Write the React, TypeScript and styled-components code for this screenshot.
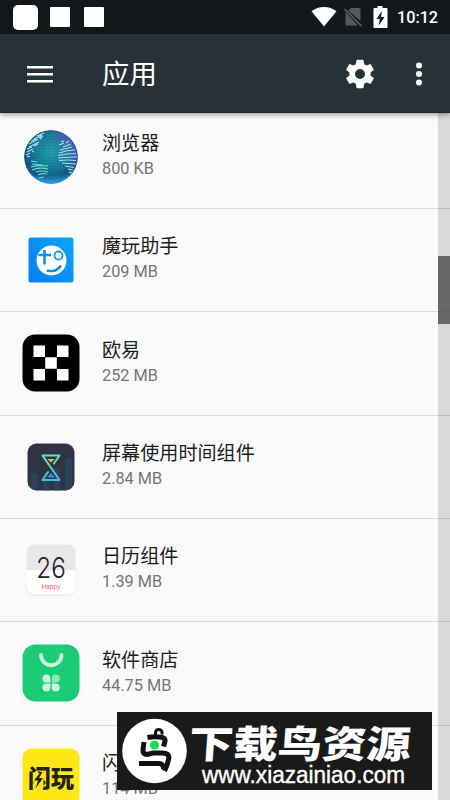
import React from "react";
import styled, { createGlobalStyle } from "styled-components";

const GlobalStyle = createGlobalStyle`
  * {
    box-sizing: border-box;
  }
  body {
    margin: 0;
    overflow: hidden;
    font-family: Roboto, "Noto Sans CJK SC", sans-serif;
    background: #fafafa;
  }
  svg {
    display: block;
    flex-shrink: 0;
  }
`;

const Screen = styled.div`
  position: relative;
  display: flex;
  flex-direction: column;
  width: 450px;
  height: 800px;
  overflow: hidden;
  background: #fafafa;
`;

const StatusBar = styled.div`
  display: flex;
  align-items: center;
  height: 34px;
  flex-shrink: 0;
  padding: 0 11px 0 13px;
  background: #14181b;
`;

const Notice = styled.div<{ $size: number; $radius: number; $gap: number }>`
  width: ${({ $size }) => $size}px;
  height: ${({ $size }) => $size}px;
  margin-right: ${({ $gap }) => $gap}px;
  border-radius: ${({ $radius }) => $radius}px;
  background: #fff;
`;

const StatusIcons = styled.div`
  display: flex;
  align-items: center;
  margin-left: auto;
`;

const Clock = styled.span`
  width: 42px;
  margin-left: 9px;
  color: #fff;
  font-size: 16.2px;
  font-weight: 500;
  line-height: 35px;
  white-space: nowrap;
`;

const Toolbar = styled.header`
  position: relative;
  z-index: 1;
  display: flex;
  align-items: center;
  height: 79px;
  flex-shrink: 0;
  padding: 1px 24px 0 27px;
  background: #273238;
  border-bottom: 1px solid #1b2529;
  box-shadow: 0 2px 5px rgba(0, 0, 0, 0.35);
`;

const Title = styled.h1`
  flex: 1;
  margin: 0 0 0 49px;
  padding-top: 3px;
  color: #fff;
  font-size: 27.5px;
  font-weight: 400;
  line-height: 40px;
`;

const List = styled.main`
  position: relative;
  flex: 1;
  min-height: 0;
  overflow: hidden;
`;

const Rows = styled.ul`
  margin: -7.4px 0 0;
  padding: 0;
  list-style: none;
`;

const Row = styled.li`
  display: flex;
  align-items: center;
  height: 103.33px;
  border-bottom: 1.4px solid #d9d9d9;
`;

const IconSlot = styled.div`
  display: flex;
  align-items: center;
  justify-content: center;
  width: 102px;
  height: 60px;
`;

const Details = styled.div`
  padding-bottom: 2px;
`;

const Name = styled.div`
  color: #1c1c1c;
  font-size: 19.1px;
  line-height: 26px;
`;

const Size = styled.div`
  color: #757575;
  font-size: 16.3px;
  line-height: 23.5px;
`;

const ScrollTrack = styled.div`
  position: absolute;
  top: 0;
  right: 0;
  bottom: 0;
  width: 12px;
  background: rgba(0, 0, 0, 0.13);
`;

const ScrollThumb = styled.div`
  height: 68px;
  margin-top: 143px;
  background: rgba(70, 70, 70, 0.77);
`;

const Watermark = styled.div`
  position: absolute;
  left: 117px;
  top: 712px;
  z-index: 2;
  display: flex;
  align-items: center;
  width: 315px;
  height: 78px;
  padding-left: 5px;
  background: #1a1a1a;
  color: #fff;
`;

const MenuIcon = () => (
  <svg width="26" height="18" fill="#fff">
    <path d="M0 1h26v2.6H0zM0 8h26v2.6H0zM0 15h26v2.6H0z" />
  </svg>
);

const SettingsIcon = () => (
  <svg width="34" height="34" viewBox="0 0 24 24" fill="#fff">
    <path d="M19.43 12.98c.04-.32.07-.64.07-.98s-.03-.66-.07-.98l2.11-1.65c.19-.15.24-.42.12-.64l-2-3.46c-.12-.22-.39-.3-.61-.22l-2.49 1c-.52-.4-1.08-.73-1.69-.98l-.38-2.65A.49.49 0 0 0 14 2h-4c-.25 0-.46.18-.49.42l-.38 2.65c-.61.25-1.17.59-1.69.98l-2.49-1c-.23-.09-.49 0-.61.22l-2 3.46c-.13.22-.07.49.12.64l2.11 1.65c-.04.32-.07.65-.07.98s.03.66.07.98l-2.11 1.65c-.19.15-.24.42-.12.64l2 3.46c.12.22.39.3.61.22l2.49-1c.52.4 1.08.73 1.69.98l.38 2.65c.03.24.24.42.49.42h4c.25 0 .46-.18.49-.42l.38-2.65c.61-.25 1.17-.59 1.69-.98l2.49 1c.23.09.49 0 .61-.22l2-3.46c.12-.22.07-.49-.12-.64l-2.11-1.65zM12 15.5a3.5 3.5 0 1 1 0-7 3.5 3.5 0 0 1 0 7z" />
  </svg>
);

const MoreIcon = styled.svg`
  margin-left: 35px;
`;

const WifiIcon = () => (
  <svg width="26" height="20" fill="#fff">
    <path d="M13 19.5L.5 4.3C4 1.5 8.3 0 13 0s9 1.500 12.500 4.300z" />
  </svg>
);

const NoSimIcon = styled.svg`
  margin: 0 11px 0 7px;
`;

const BatteryIcon = () => (
  <svg width="15" height="22">
    <path d="M4.500 0h5v2H13.500q1 0 1 1v18q0 1-1 1h-12q-1 0-1-1V3q0-1 1-1h3z" fill="#fff" />
    <path d="M8.800 5L3.500 13h3.300l-1 6.500L11.500 11H8z" fill="#14181b" />
  </svg>
);

const BrowserIcon = () => (
  <svg width="56" height="56" viewBox="0 0 56 56">
    <defs>
      <radialGradient id="globe" cx=".5" cy=".4" r=".6">
        <stop offset="0" stopColor="#259fae" />
        <stop offset=".5" stopColor="#177d98" />
        <stop offset=".85" stopColor="#12547f" />
        <stop offset="1" stopColor="#2183c0" />
      </radialGradient>
      <linearGradient id="rim" x1=".5" y1=".5" x2="1" y2=".15">
        <stop offset=".3" stopColor="#7657d8" stopOpacity="0" />
        <stop offset="1" stopColor="#8a51e0" />
      </linearGradient>
      <linearGradient id="floor" x1="0" y1="0" x2="0" y2="1">
        <stop offset=".82" stopColor="#2fa8e8" stopOpacity="0" />
        <stop offset="1" stopColor="#2fa8e8" stopOpacity=".9" />
      </linearGradient>
      <pattern id="dots" width="3" height="3" patternUnits="userSpaceOnUse">
        <circle cx="1.500" cy="1.500" r=".6" fill="#0b4771" />
      </pattern>
      <clipPath id="globeClip">
        <circle cx="28" cy="28" r="27" />
      </clipPath>
    </defs>
    <g clipPath="url(#globeClip)">
      <circle cx="28" cy="28" r="27" fill="url(#globe)" />
      <circle cx="28" cy="28" r="27" fill="url(#dots)" opacity=".4" />
      <circle cx="28" cy="28" r="27" fill="url(#rim)" opacity=".75" />
      <circle cx="28" cy="28" r="27" fill="url(#floor)" />
      <g fill="none" stroke="#a8e2ee" strokeWidth="1.200">
        <path d="M14 7l7-3M11 10l8-4M8 12l5-2m3-1l4-2M6 15l9-5m2 0l2-1M6 18l10-5M4 20l5-2m2-1l4-2M4 23l6-3M3 26l4-2m2-1l2-1M4 28l3-1" />
        <path d="M38 13l3-1M36 16l5-2m2 0l3-2M40 18l8-3M37 21l12-3M36 24q8-3 16-3M35 26.500q9-2 18-2M35 29q9-1 19-1M36 31.500q9-1 17 0M39 34l14 1M42 37l9 1.500M45 40l5 1M46 43l3 1" />
        <path d="M8 32l6 1M9 35l10 1M8 38q7-2 17-1M9 41q7-3 16-1M13 43q5-2 12 0M15 46q4-2 9-1M16 49l5-1" stroke="#62ded3" />
      </g>
    </g>
  </svg>
);

const HelperIcon = () => (
  <svg width="46" height="46" viewBox="0 0 46 46">
    <defs>
      <linearGradient id="helper" x1="1" y1="0" x2="0" y2="1">
        <stop offset="0" stopColor="#0ba6f5" />
        <stop offset="1" stopColor="#087cf5" />
      </linearGradient>
    </defs>
    <rect x=".5" y=".5" width="45" height="45" rx="2.500" fill="url(#helper)" />
    <circle cx="23.500" cy="23.500" r="15" fill="#fff" />
    <path d="M16.500 13v14.500M10.500 18h12.500" stroke="#0b91f4" strokeWidth="2.600" />
    <circle cx="30.500" cy="18.500" r="5.500" fill="#fff" />
    <circle cx="30.500" cy="18.500" r="4" fill="#fff" stroke="#1798f5" strokeWidth="1.800" />
    <path d="M19 33.500q9 2.500 14-5" fill="none" stroke="#0b88f4" strokeWidth="2.400" />
  </svg>
);

const OkxIcon = () => (
  <svg width="58" height="58" viewBox="0 0 58 58">
    <rect x=".5" y=".5" width="57" height="57" rx="12.500" />
    <path
      d="M11.500 11.500h11.500v11.500H11.500zM35 11.500h11.500v11.500H35zM23.200 23.200h11.600v11.600H23.200zM11.500 35h11.500v11.500H11.500zM35 35h11.500v11.500H35z"
      fill="#fff"
    />
  </svg>
);

const ScreenTimeIcon = () => (
  <svg width="48" height="48" viewBox="0 0 48 48">
    <defs>
      <linearGradient id="glass" x1="0" y1="0" x2="0" y2="1">
        <stop offset="0" stopColor="#66e3b0" />
        <stop offset="1" stopColor="#4fb7e6" />
      </linearGradient>
      <clipPath id="timeClip">
        <rect x=".5" y=".5" width="47" height="47" rx="9" />
      </clipPath>
    </defs>
    <g clipPath="url(#timeClip)">
      <rect width="48" height="48" fill="#2f3445" />
      <path d="M4 30h7v18H4zM16 37h6v11h-6zM27 25h6v23h-6zM38 16h7v32h-7z" fill="#2b4d66" opacity=".6" />
    </g>
    <path d="M20.500 16h7l-3.500 3.500z" fill="#f4b64c" />
    <path d="M20 34.500l4-4.500 4 4.500z" fill="#418be0" />
    <path
      d="M27 20.500L32.500 12.500H15.500L32.500 37H15.500l5.500-8"
      fill="none"
      stroke="url(#glass)"
      strokeWidth="2.100"
      strokeLinejoin="round"
      strokeLinecap="round"
    />
  </svg>
);

const CalendarIcon = () => (
  <svg width="52" height="54" viewBox="0 0 52 54">
    <rect x="1" y="2" width="50" height="51" rx="9" fill="#ececec" />
    <rect x="1.500" y="1.500" width="49" height="50" rx="8.500" fill="#fff" />
    <path d="M1.500 27V10q0-8.500 8.500-8.500h32q8.500 0 8.500 8.500v17z" fill="#e8e8e8" />
    <text x="26" y="34.500" textAnchor="middle" fontFamily="Inter" fontWeight="300" fontSize="28" textLength="29.500" lengthAdjust="spacingAndGlyphs" fill="#222">
      26
    </text>
    <text x="26" y="46" textAnchor="middle" fontFamily="Inter" fontSize="6.200" fill="#f06060">
      Happy
    </text>
  </svg>
);

const StoreIcon = () => (
  <svg width="58" height="58" viewBox="0 0 58 58">
    <rect x=".5" y=".5" width="57" height="57" rx="13" fill="#1bcb76" />
    <path d="M19 11a10 10 0 0 0 20.500 0" fill="none" stroke="#c8f8df" strokeWidth="3.800" strokeLinecap="round" />
    <g fill="#c6f6dc">
      <path d="M28.400 38.400h-4a4 4 0 1 1 4-4zM28.400 39.600v4a4 4 0 1 1-4-4zM29.800 39.600h4a4 4 0 1 1-4 4z" />
      <path d="M29.800 38.400v-4a4 4 0 1 1 4 4z" fill="#8beabc" />
    </g>
  </svg>
);

const FlashPlayIcon = () => (
  <svg width="58" height="58" viewBox="0 0 58 58">
    <rect x=".5" y=".5" width="57" height="57" rx="9" fill="#fee714" />
    <text
      x="6"
      y="39"
      fontFamily="'Noto Sans CJK SC', sans-serif"
      fontWeight="900"
      fontSize="24"
      textLength="46"
      lengthAdjust="spacingAndGlyphs"
      fill="#252111"
    >
      闪玩
    </text>
    <path d="M11.500 25h10v15h-10z" fill="#fee714" />
    <path d="M18.500 24l-6.500 8.500h4l-2.500 8 7.500-10.500h-4l3.500-6z" fill="#252111" />
  </svg>
);

const BirdLogo = () => (
  <svg width="65" height="66" viewBox="0 0 65 66">
    <circle cx="32.500" cy="33" r="32.300" fill="#fff" />
    <g fill="none" stroke="#111" strokeWidth="5">
      <path d="M25.500 19.500q8-1.500 15 0 3 1 2.500 4l-1.500 5" />
      <path d="M22 24l-1 8q0 4.500 4 4.500l6-1.500h9q7 0 7 4.500l-1.500 6-3 7.500" />
      <path d="M17 45.500h20q4 0 5 5.500" />
      <path d="M33.500 19v-4q0-3.500 3.500-3.500t3 5" strokeWidth="3" />
    </g>
    <circle cx="32.500" cy="27" r="4.600" fill="#20dc55" />
  </svg>
);

const Banner = () => (
  <svg width="245" height="78" fill="#fff">
    <text
      transform="translate(1 46) skewX(-4)"
      fontFamily="'Noto Sans CJK SC', sans-serif"
      fontWeight="900"
      fontSize="38"
      textLength="222"
      lengthAdjust="spacingAndGlyphs"
    >
      下载鸟资源
    </text>
    <text
      x="15"
      y="70.500"
      fontFamily="'Liberation Sans', sans-serif"
      fontSize="23"
      textLength="203"
      lengthAdjust="spacingAndGlyphs"
      stroke="#fff"
      strokeWidth=".4"
    >
      www.xiazainiao.com
    </text>
  </svg>
);

const apps = [
  { name: "浏览器", size: "800 KB", Icon: BrowserIcon },
  { name: "魔玩助手", size: "209 MB", Icon: HelperIcon },
  { name: "欧易", size: "252 MB", Icon: OkxIcon },
  { name: "屏幕使用时间组件", size: "2.84 MB", Icon: ScreenTimeIcon },
  { name: "日历组件", size: "1.39 MB", Icon: CalendarIcon },
  { name: "软件商店", size: "44.75 MB", Icon: StoreIcon },
  { name: "闪玩", size: "114 MB", Icon: FlashPlayIcon },
];

const App: React.FC = () => {
  return (
    <Screen>
      <GlobalStyle />
      <StatusBar>
        <Notice $size={25} $radius={5} $gap={12} />
        <Notice $size={20} $radius={1} $gap={14} />
        <Notice $size={20} $radius={1} $gap={0} />
        <StatusIcons>
          <WifiIcon />
          <NoSimIcon width="18" height="20">
            <path d="M7 1h8q1.500 0 1.500 1.500V14L4 3.500zM1.500 5L14 18.500H3q-1.500 0-1.500-1.500z" fill="#56595b" />
            <path d="M.5 2l17 17" stroke="#66696a" strokeWidth="1.500" />
          </NoSimIcon>
          <BatteryIcon />
          <Clock>10:12</Clock>
        </StatusIcons>
      </StatusBar>
      <Toolbar>
        <MenuIcon />
        <Title>应用</Title>
        <SettingsIcon />
        <MoreIcon width="14" height="26" fill="#fff">
          <circle cx="7" cy="4.500" r="3" />
          <circle cx="7" cy="13" r="3" />
          <circle cx="7" cy="21.500" r="3" />
        </MoreIcon>
      </Toolbar>
      <List>
        <Rows>
          {apps.map(({ name, size, Icon }) => (
            <Row key={name}>
              <IconSlot>
                <Icon />
              </IconSlot>
              <Details>
                <Name>{name}</Name>
                <Size>{size}</Size>
              </Details>
            </Row>
          ))}
        </Rows>
        <ScrollTrack>
          <ScrollThumb />
        </ScrollTrack>
      </List>
      <Watermark>
        <BirdLogo />
        <Banner />
      </Watermark>
    </Screen>
  );
};

export default App;
